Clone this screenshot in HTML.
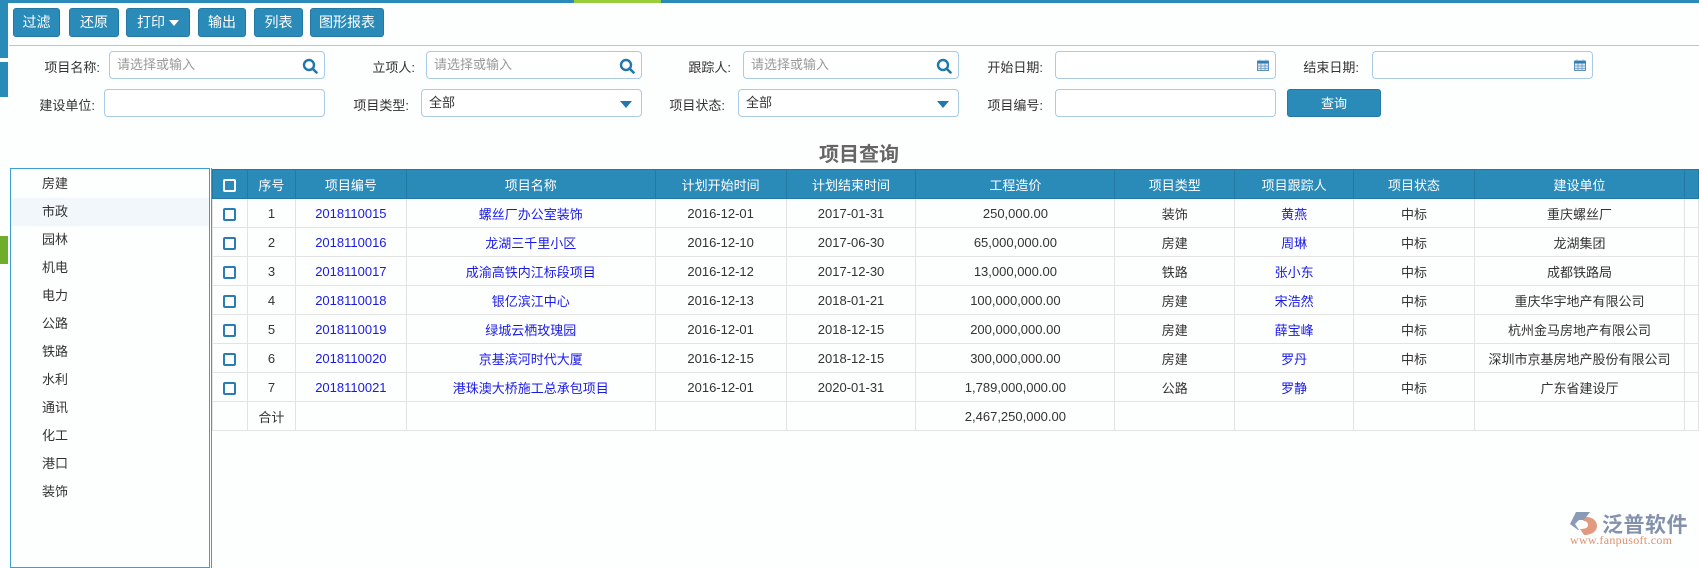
<!DOCTYPE html>
<html><head><meta charset="utf-8">
<style>
*{box-sizing:border-box;margin:0;padding:0}
body{width:1699px;height:556px;overflow:hidden;background:#fdfefe;font-family:"Liberation Sans","Noto Sans CJK SC",sans-serif;font-size:13px;color:#333;position:relative}
.a{position:absolute}
.btn{position:absolute;top:8px;height:29px;background:#2a8bb9;border:1px solid #2379a3;border-radius:3px;color:#fff;font-size:14px;line-height:27px;text-align:center}
.lbl{position:absolute;text-align:right;font-size:13px;color:#333;width:90px}
.inp{position:absolute;height:28px;border:1px solid #a9cbe3;border-radius:4px;background:#fff;font-size:13px;line-height:26px;padding-left:7px;color:#333}
.ph{color:#999}
.ico{position:absolute;right:6px;top:6px}
.tri{position:absolute;right:9px;top:11px;width:0;height:0;border-left:6px solid transparent;border-right:6px solid transparent;border-top:7px solid #1f77ad}
.tree div{height:28px;line-height:28px;padding-left:31px;font-size:13px;color:#333}
table{border-collapse:collapse;table-layout:fixed;position:absolute;left:212px;top:169px}
td,th{height:29px;text-align:center;border:1px solid #e3e3e3;font-size:13px;white-space:nowrap;overflow:hidden;font-weight:normal}
th{background:#2a8bb9;color:#fff;border-color:#2379a3}
td a{color:#1a1ae8;text-decoration:none}
.cb{display:inline-block;width:13px;height:13px;border:2px solid #2a7db0;border-radius:2px;vertical-align:middle;background:#fff}
th .cb{border-color:#fff;background:transparent}
</style></head><body>
<div class="a" style="left:0;top:0;width:1699px;height:3px;background:#2a8bb9"></div>
<div class="a" style="left:574px;top:0;width:87px;height:3px;background:#9acd3c"></div>
<div class="a" style="left:0;top:0;width:8px;height:58px;background:#2a8bb9"></div>
<div class="a" style="left:0;top:62px;width:8px;height:35px;background:#2a8bb9"></div>
<div class="a" style="left:0;top:236px;width:8px;height:28px;background:#6fae2c"></div>

<div class="btn" style="left:13px;width:47px">过滤</div>
<div class="btn" style="left:69px;width:50px">还原</div>
<div class="btn" style="left:126px;width:64px">打印 <span style="display:inline-block;width:0;height:0;border-left:5px solid transparent;border-right:5px solid transparent;border-top:6px solid #fff;vertical-align:middle"></span></div>
<div class="btn" style="left:198px;width:48px">输出</div>
<div class="btn" style="left:254px;width:49px">列表</div>
<div class="btn" style="left:310px;width:74px">图形报表</div>
<div class="a" style="left:9px;top:45px;width:1690px;height:1px;background:#a9cbe3"></div>

<svg width="0" height="0" style="position:absolute"><defs><symbol id="q" viewBox="0 0 16 16"><circle cx="7" cy="7" r="5" fill="none" stroke="#1f77ad" stroke-width="2.4"/><path d="M10.5 10.5L14.5 14.5" stroke="#1f77ad" stroke-width="2.6" stroke-linecap="round"/></symbol>
<symbol id="cal" viewBox="0 0 12 12"><rect x="0.5" y="2" width="11" height="9.5" fill="#dde9f5" stroke="#5a8fc0"/><rect x="0.5" y="2" width="11" height="2.5" fill="#2a7db0"/><path d="M3 0.5v3M9 0.5v3M0.5 7h11M0.5 9.3h11M4 4.5v7M8 4.5v7" stroke="#5a8fc0" stroke-width="0.7"/></symbol></defs></svg>

<div class="lbl" style="left:10px;top:57px">项目名称:</div>
<div class="inp ph" style="left:109px;top:51px;width:216px">请选择或输入<svg class="ico" width="16" height="16"><use href="#q"/></svg></div>
<div class="lbl" style="left:325px;top:57px">立项人:</div>
<div class="inp ph" style="left:426px;top:51px;width:216px">请选择或输入<svg class="ico" width="16" height="16"><use href="#q"/></svg></div>
<div class="lbl" style="left:641px;top:57px">跟踪人:</div>
<div class="inp ph" style="left:743px;top:51px;width:216px">请选择或输入<svg class="ico" width="16" height="16"><use href="#q"/></svg></div>
<div class="lbl" style="left:953px;top:57px">开始日期:</div>
<div class="inp" style="left:1055px;top:51px;width:221px"><svg class="ico" style="top:7px" width="12" height="12"><use href="#cal"/></svg></div>
<div class="lbl" style="left:1269px;top:57px">结束日期:</div>
<div class="inp" style="left:1372px;top:51px;width:221px"><svg class="ico" style="top:7px" width="12" height="12"><use href="#cal"/></svg></div>

<div class="lbl" style="left:5px;top:95px">建设单位:</div>
<div class="inp" style="left:104px;top:89px;width:221px"></div>
<div class="lbl" style="left:319px;top:95px">项目类型:</div>
<div class="inp" style="left:421px;top:89px;width:221px">全部<span class="tri"></span></div>
<div class="lbl" style="left:635px;top:95px">项目状态:</div>
<div class="inp" style="left:738px;top:89px;width:221px">全部<span class="tri"></span></div>
<div class="lbl" style="left:953px;top:95px">项目编号:</div>
<div class="inp" style="left:1055px;top:89px;width:221px"></div>
<div class="btn" style="left:1287px;top:89px;width:94px;height:28px;font-size:13px">查询</div>

<div class="a" style="left:759px;top:138px;width:200px;text-align:center;font-size:20px;font-weight:bold;color:#666">项目查询</div>

<div class="a tree" style="left:10px;top:168px;width:200px;height:400px;border:1px solid #3d9fd0;padding-top:1px">
<div>房建</div><div style="background:#f2f7fc">市政</div><div>园林</div><div>机电</div><div>电力</div><div>公路</div><div>铁路</div><div>水利</div><div>通讯</div><div>化工</div><div>港口</div><div>装饰</div>
</div>
<div class="a" style="left:211px;top:168px;width:1px;height:400px;background:#3d9fd0"></div>

<table>
<colgroup><col style="width:35px"><col style="width:48px"><col style="width:111px"><col style="width:249px"><col style="width:131px"><col style="width:130px"><col style="width:199px"><col style="width:120px"><col style="width:119px"><col style="width:121px"><col style="width:210px"><col style="width:14px"></colgroup>
<tr><th><span class="cb"></span></th><th>序号</th><th>项目编号</th><th>项目名称</th><th>计划开始时间</th><th>计划结束时间</th><th>工程造价</th><th>项目类型</th><th>项目跟踪人</th><th>项目状态</th><th>建设单位</th><th></th></tr>
<tr><td><span class="cb"></span></td><td>1</td><td><a>2018110015</a></td><td><a>螺丝厂办公室装饰</a></td><td>2016-12-01</td><td>2017-01-31</td><td>250,000.00</td><td>装饰</td><td><a>黄燕</a></td><td>中标</td><td>重庆螺丝厂</td><td></td></tr>
<tr><td><span class="cb"></span></td><td>2</td><td><a>2018110016</a></td><td><a>龙湖三千里小区</a></td><td>2016-12-10</td><td>2017-06-30</td><td>65,000,000.00</td><td>房建</td><td><a>周琳</a></td><td>中标</td><td>龙湖集团</td><td></td></tr>
<tr><td><span class="cb"></span></td><td>3</td><td><a>2018110017</a></td><td><a>成渝高铁内江标段项目</a></td><td>2016-12-12</td><td>2017-12-30</td><td>13,000,000.00</td><td>铁路</td><td><a>张小东</a></td><td>中标</td><td>成都铁路局</td><td></td></tr>
<tr><td><span class="cb"></span></td><td>4</td><td><a>2018110018</a></td><td><a>银亿滨江中心</a></td><td>2016-12-13</td><td>2018-01-21</td><td>100,000,000.00</td><td>房建</td><td><a>宋浩然</a></td><td>中标</td><td>重庆华宇地产有限公司</td><td></td></tr>
<tr><td><span class="cb"></span></td><td>5</td><td><a>2018110019</a></td><td><a>绿城云栖玫瑰园</a></td><td>2016-12-01</td><td>2018-12-15</td><td>200,000,000.00</td><td>房建</td><td><a>薛宝峰</a></td><td>中标</td><td>杭州金马房地产有限公司</td><td></td></tr>
<tr><td><span class="cb"></span></td><td>6</td><td><a>2018110020</a></td><td><a>京基滨河时代大厦</a></td><td>2016-12-15</td><td>2018-12-15</td><td>300,000,000.00</td><td>房建</td><td><a>罗丹</a></td><td>中标</td><td>深圳市京基房地产股份有限公司</td><td></td></tr>
<tr><td><span class="cb"></span></td><td>7</td><td><a>2018110021</a></td><td><a>港珠澳大桥施工总承包项目</a></td><td>2016-12-01</td><td>2020-01-31</td><td>1,789,000,000.00</td><td>公路</td><td><a>罗静</a></td><td>中标</td><td>广东省建设厅</td><td></td></tr>
<tr><td style="border-right:none"></td><td>合计</td><td></td><td></td><td></td><td></td><td>2,467,250,000.00</td><td></td><td></td><td></td><td></td><td></td></tr>
</table>

<svg class="a" style="left:1568px;top:511px" width="34" height="26" viewBox="0 0 34 26"><path d="M8 1h14L16 9H11L7 13l4 6h-1L2 13z" fill="#8a9bb8"/><path d="M18 6c7 0 11 4 11 9s-5 9-13 9l-4-6c5 0 8-1 8-4s-2-4-5-4z" fill="#e19a80"/></svg>
<div class="a" style="left:1602px;top:509px;font-size:21px;font-weight:bold;color:#8391ab;letter-spacing:0.5px">泛普软件</div>
<div class="a" style="left:1570px;top:533px;font-family:'Liberation Serif',serif;font-size:12px;color:#e0906e;letter-spacing:0.3px">www.fanpusoft.com</div>
</body></html>
